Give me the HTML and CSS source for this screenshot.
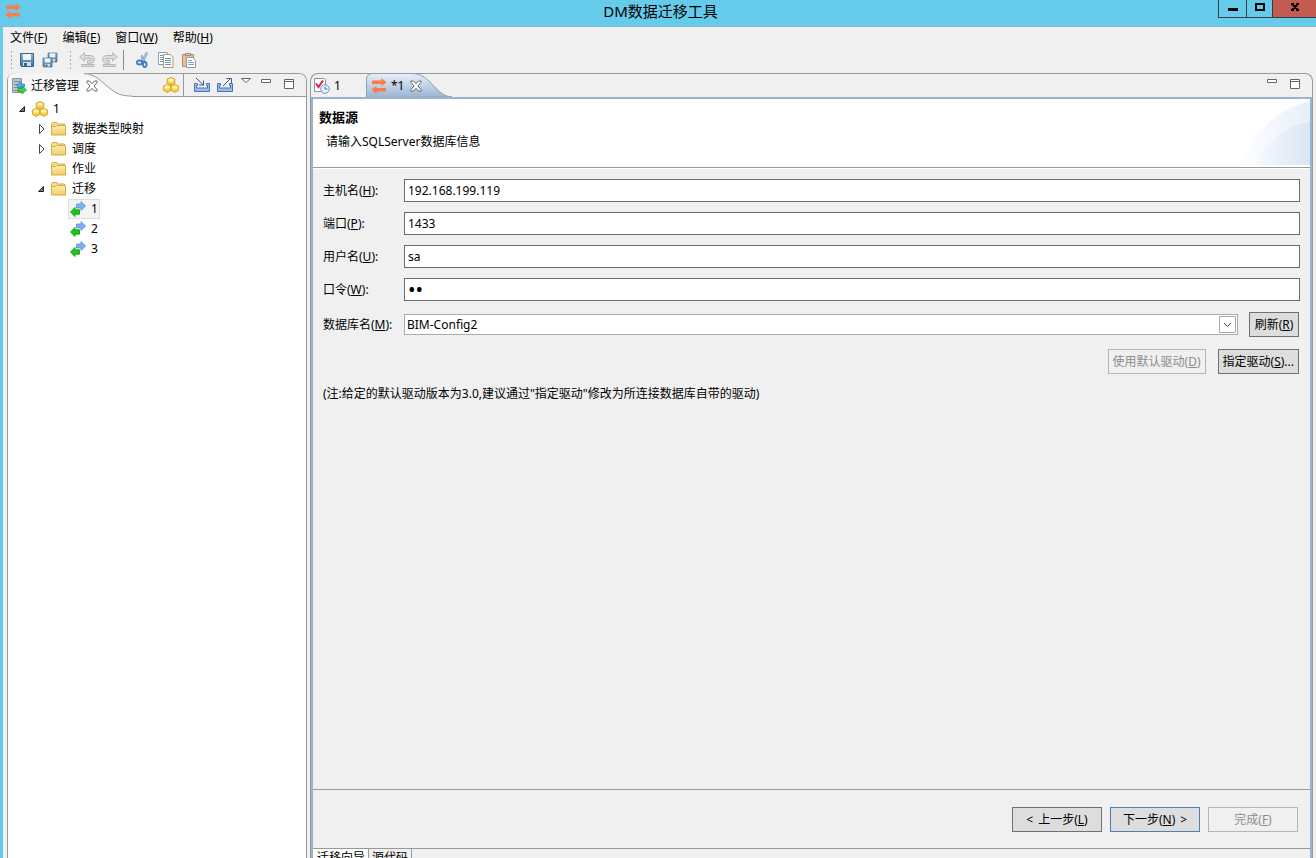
FILE: index.html
```html
<!DOCTYPE html>
<html lang="zh-CN">
<head>
<meta charset="utf-8">
<title>DM数据迁移工具</title>
<link rel="stylesheet" href="styles.css">
</head>
<body>
<svg class="defs" aria-hidden="true">
  <defs>
    <linearGradient id="gold" x1="0" y1="0" x2="0" y2="1"><stop offset="0" stop-color="#fff0a0"/><stop offset="1" stop-color="#f2c42c"/></linearGradient>
    <linearGradient id="fold" x1="0" y1="0" x2="0" y2="1"><stop offset="0" stop-color="#fdeeb0"/><stop offset="1" stop-color="#f1cd62"/></linearGradient>
    <linearGradient id="disk" x1="0" y1="0" x2="0" y2="1"><stop offset="0" stop-color="#8fb4d0"/><stop offset="1" stop-color="#3f7199"/></linearGradient>
    <linearGradient id="blueTab" x1="0" y1="0" x2="0" y2="1"><stop offset="0" stop-color="#e9f0f8"/><stop offset="1" stop-color="#99b4d1"/></linearGradient>
    <linearGradient id="whiteTab" x1="0" y1="0" x2="0" y2="1"><stop offset="0" stop-color="#f4f4f4"/><stop offset="1" stop-color="#ffffff"/></linearGradient>
    <linearGradient id="arcA" x1="0" y1="0" x2="1" y2="0"><stop offset="0" stop-color="#ffffff"/><stop offset="1" stop-color="#e8eefa"/></linearGradient>
    <linearGradient id="arcB" x1="0" y1="0" x2="1" y2="0"><stop offset="0" stop-color="#f5f8fe"/><stop offset="1" stop-color="#dbe5f4"/></linearGradient>
    <symbol id="swap" viewBox="0 0 16 16"><path fill="#fb7c48" d="M1 2.500h9.500V0L15.500 4.200l-5 4.100V6H1zM15 10H5.500V7.700l-5 4.100 5 4.200v-2.500H15z"/></symbol>
    <symbol id="cubes" viewBox="0 0 16 16"><g fill="url(#gold)" stroke="#cf9d1c" stroke-width=".9"><path d="M8 .5l3.800 1.500v4.200L8 8 4.200 6.200V2z"/><path d="M4.200 7.300L8 9v4.200l-3.800 2.200L.4 13.200V9z"/><path d="M11.800 7.300L15.600 9v4.200l-3.800 2.200L8 13.200V9z"/></g><path fill="none" stroke="#fff8cc" stroke-width="1.300" d="M5.800 2.700l2.200 1 2.200-1M2 9.900l2.200 1 2.200-1M9.600 9.900l2.200 1 2.200-1"/></symbol>
    <symbol id="folder" viewBox="0 0 16 16"><path fill="#f7dc86" stroke="#d3ad4b" d="M.5 13.500v-11l1-1h4.500l1 1.500h6.500v10.500z"/><path fill="url(#fold)" stroke="#d3ad4b" d="M.5 14V5.500h4l1-1h9V14z"/></symbol>
    <symbol id="transfer" viewBox="0 0 16 16"><path fill="#82aff0" stroke="#5f8dd3" stroke-width=".8" d="M6.500 3H11V.5L15.600 5 11 9.500V7H6.500z"/><path fill="#16c916" stroke="#0a9410" stroke-width=".8" d="M9.500 8.800H5V6.400L.5 11 5 15.600v-2.400h4.500z"/></symbol>
    <symbol id="floppy" viewBox="0 0 16 16"><path fill="url(#disk)" stroke="#376688" d="M1.500 1.500h13v13h-12l-1-1z"/><path fill="#eef5fa" d="M4 2h8v6H4z"/><path fill="#d0dee9" d="M4 10h8v4H4z"/><path fill="#376688" d="M5 11h3v3H5z"/></symbol>
    <symbol id="undo" viewBox="0 0 16 16"><path fill="#dadada" stroke="#b8b8b8" d="M.7 5L5.500.7v2.800H11q4.300 0 4.300 3.800 0 4-4.300 4H8.500V8.500H11q1.200 0 1.200-1T11 6.500H5.500v2.800zM2.500 12.500h12.500v2H2.500z"/></symbol>
    <symbol id="closeX" viewBox="0 0 12 12"><path fill="#fff" stroke="#666" d="M1 1h2.500L6 3.700 8.500 1H11v1.500L8 6l3 3.500V11H8.500L6 8.300 3.500 11H1V9.500L4 6 1 2.500z"/></symbol>
    <symbol id="minView" viewBox="0 0 12 12"><path fill="#fff" stroke="#666" d="M1.500 1.500h9v3h-9z"/></symbol>
    <symbol id="maxView" viewBox="0 0 12 12"><path fill="#fff" stroke="#666" d="M1.500 1.500h9v9h-9zM1.500 3.500h9"/></symbol>
    <symbol id="tray" viewBox="0 0 16 16"><path fill="#9dbce8" stroke="#4a72b8" d="M.5 6.500h3v2h-1v2.500h11V8.500h-1v-2h3v8H.5z"/></symbol>
    <symbol id="closed" viewBox="0 0 10 10"><path fill="#fff" stroke="#444" d="M3.500 .5v9L8 5z"/></symbol>
    <symbol id="open" viewBox="0 0 10 10"><path fill="#777" stroke="#222" d="M7.500 2.500v5h-5z"/></symbol>
  </defs>
</svg>
<div class="window">
  <header class="titlebar">
    <svg class="icon app-icon"><use href="#swap"/></svg>
    <h1 class="title">DM数据迁移工具</h1>
    <div class="window-buttons">
      <button class="win-btn" aria-label="最小化"><svg width="12" height="12"><path fill="#000" d="M1 7h10v3H1z"/></svg></button>
      <button class="win-btn win-max" aria-label="最大化"><svg width="12" height="12"><path fill="none" stroke="#000" stroke-width="2" d="M2 3h8v6H2z"/></svg></button>
      <button class="win-btn win-close" aria-label="关闭"><svg width="12" height="12"><path fill="none" stroke="#000" stroke-width="2" d="M3 3l6 6M9 3l-6 6M2 3h3M7 3h3M2 9h3M7 9h3"/></svg></button>
    </div>
  </header>
  <div class="shell">
    <nav class="menubar">
      <button class="menu">文件(<u>F</u>)</button>
      <button class="menu">编辑(<u>E</u>)</button>
      <button class="menu">窗口(<u>W</u>)</button>
      <button class="menu">帮助(<u>H</u>)</button>
    </nav>
    <div class="toolbar">
      <span class="grip"></span>
      <button class="tool" aria-label="保存"><svg class="icon"><use href="#floppy"/></svg></button>
      <button class="tool" aria-label="全部保存"><svg class="icon" viewBox="0 0 16 16"><use href="#floppy" x="5" y="0" width="11" height="11"/><use href="#floppy" x="0" y="5" width="11" height="11"/></svg></button>
      <span class="grip grip-mid"></span>
      <button class="tool" aria-label="撤销" disabled><svg class="icon"><use href="#undo"/></svg></button>
      <button class="tool" aria-label="重做" disabled><svg class="icon flip"><use href="#undo"/></svg></button>
      <span class="divider"></span>
      <button class="tool" aria-label="剪切"><svg class="icon" viewBox="0 0 16 16"><path fill="#b9d3ea" stroke="#6f9ac4" stroke-width=".8" d="M11.500 0l1 2-4.500 8-1.500-.5zM7 3l3 6-1.500 1.500L6 5z"/><g fill="none" stroke="#3f7cc0" stroke-width="1.800"><ellipse cx="4.500" cy="10.500" rx="2.600" ry="2"/><ellipse cx="9.800" cy="12.500" rx="1.800" ry="2.500"/></g></svg></button>
      <button class="tool" aria-label="复制"><svg class="icon" viewBox="0 0 16 16"><path fill="#fff" stroke="#7fa0bd" d="M.5 .5h9v12h-9z"/><path fill="#fff" stroke="#b39c5c" d="M5.500 2.500h7l2.500 2.500v10.500H5.500z"/><path stroke="#6993c4" d="M2 3.500h3M2 5.500h3M2 7.500h3M2 9.500h3M7 6.500h6M7 8.500h6M7 10.500h6M7 12.500h6"/></svg></button>
      <button class="tool" aria-label="粘贴"><svg class="icon" viewBox="0 0 16 16"><path fill="#e8c28c" stroke="#b58c54" d="M1.500 2.500h11v12h-11z"/><path fill="#ddd" stroke="#888" d="M4.500 3.500v-2h5v2z"/><path fill="#fff" stroke="#8c9cb0" d="M5.500 5.500h6l3 3v7h-9z"/><path stroke="#7ea0cc" d="M7 8.500h4M7 10.500h6M7 12.500h6"/></svg></button>
    </div>
    <div class="workbench">
      <aside class="view">
        <div class="view-head">
          <div class="view-tab">
            <svg class="tab-shape" width="124" height="24" viewBox="0 0 124 24"><path fill="url(#whiteTab)" d="M0 24V7Q0 0 7 0h69c18 0 24 22.500 44 23h4v1z"/><path fill="none" stroke="#999" d="M76 .5c18 0 24 22 44 22.500h4"/></svg>
            <svg class="icon" viewBox="0 0 16 16"><path fill="#bcc6d0" stroke="#87939e" d="M1.500.5h9v14h-9z"/><path stroke="#7a8894" d="M3 3.500h6M3 6.500h6M3 9.500h6M3 12.500h4"/><path fill="#58aaf0" stroke="#2f80cc" stroke-width=".7" d="M13.500 6H10V3.500L5.500 7.200 10 11V9h3.500z"/><path fill="#3fd33f" stroke="#159a15" stroke-width=".7" d="M7 10.200h4V8l4.600 4-4.600 3.800v-2.200H7z"/></svg>
            <span>迁移管理</span>
            <button class="tool close" aria-label="关闭视图"><svg width="12" height="12"><use href="#closeX"/></svg></button>
          </div>
          <div class="view-tools">
            <button class="tool cubes" aria-label="工程"><svg class="icon"><use href="#cubes"/></svg></button>
            <button class="tool" aria-label="导入"><svg class="icon" viewBox="0 0 16 16"><use href="#tray"/><path fill="none" stroke="#315b91" d="M2 1l7.500 7M9.500 3.500v4.500H5"/></svg></button>
            <button class="tool" aria-label="导出"><svg class="icon" viewBox="0 0 16 16"><use href="#tray"/><path fill="none" stroke="#315b91" d="M6 9l8-8M9.500 1.500h5V6"/></svg></button>
            <button class="tool small" aria-label="菜单"><svg width="12" height="12"><path fill="#fff" stroke="#666" d="M1.500 1.500h9L6 5.500z"/></svg></button>
            <button class="tool small" aria-label="最小化"><svg width="12" height="12"><use href="#minView"/></svg></button>
            <button class="tool small" aria-label="最大化"><svg width="12" height="12"><use href="#maxView"/></svg></button>
          </div>
        </div>
        <ul class="tree">
          <li class="node"><svg class="twist"><use href="#open"/></svg><svg class="icon"><use href="#cubes"/></svg><span>1</span></li>
          <li class="node child"><svg class="twist"><use href="#closed"/></svg><svg class="icon"><use href="#folder"/></svg><span>数据类型映射</span></li>
          <li class="node child"><svg class="twist"><use href="#closed"/></svg><svg class="icon"><use href="#folder"/></svg><span>调度</span></li>
          <li class="node child"><svg class="twist"></svg><svg class="icon"><use href="#folder"/></svg><span>作业</span></li>
          <li class="node child"><svg class="twist"><use href="#open"/></svg><svg class="icon"><use href="#folder"/></svg><span>迁移</span></li>
          <li class="node leaf selected"><svg class="icon"><use href="#transfer"/></svg><span>1</span></li>
          <li class="node leaf"><svg class="icon"><use href="#transfer"/></svg><span>2</span></li>
          <li class="node leaf"><svg class="icon"><use href="#transfer"/></svg><span>3</span></li>
        </ul>
      </aside>
      <main class="editor">
        <div class="editor-tabs">
          <div class="etab">
            <svg class="icon" viewBox="0 0 16 16"><path fill="#fff" stroke="#8795ad" d="M.5.5h10l1 1v12H.5z"/><path fill="none" stroke="#e02430" stroke-width="2" d="M2 5.500l2.500 3.500L9 2.500"/><circle cx="11" cy="11" r="4.300" fill="#e5f1fc" stroke="#6d96c2"/><path fill="none" stroke="#46709d" d="M11 8.500V11h2.500"/></svg>
            <span>1</span>
          </div>
          <div class="etab active">
            <svg class="tab-shape" width="86" height="24" viewBox="0 0 86 24"><path fill="url(#blueTab)" stroke="#8e9fb3" d="M.5 24.500V6Q1 .5 7 .5h40c18 0 22 23 39 23.500z"/></svg>
            <svg class="icon"><use href="#swap"/></svg>
            <span>*1</span>
            <button class="tool close" aria-label="关闭"><svg width="12" height="12"><use href="#closeX"/></svg></button>
          </div>
          <div class="editor-tools">
            <button class="tool small" aria-label="最小化"><svg width="12" height="12"><use href="#minView"/></svg></button>
            <button class="tool small" aria-label="最大化"><svg width="12" height="12"><use href="#maxView"/></svg></button>
          </div>
        </div>
        <div class="editor-body">
          <section class="banner">
            <div><h2 class="banner-title">数据源</h2><p class="banner-text">请输入SQLServer数据库信息</p></div>
            <svg class="banner-art" width="72" height="68" viewBox="0 0 72 68"><path fill="url(#arcA)" d="M0 66Q24 14 72 2v64z"/><path fill="url(#arcB)" d="M18 66Q36 28 72 23v43z"/></svg>
          </section>
          <form class="form">
            <div class="field"><label for="host">主机名(<u>H</u>):</label><input id="host" class="text" type="text" value="192.168.199.119"></div>
            <div class="field"><label for="port">端口(<u>P</u>):</label><input id="port" class="text" type="text" value="1433"></div>
            <div class="field"><label for="user">用户名(<u>U</u>):</label><input id="user" class="text" type="text" value="sa"></div>
            <div class="field"><label for="pass">口令(<u>W</u>):</label><input id="pass" class="text password" type="password" value="sa"></div>
            <div class="field database">
              <label for="db">数据库名(<u>M</u>):</label>
              <div class="db-row">
                <div class="combo"><select id="db" class="select"><option>BIM-Config2</option></select><svg class="chevron" width="17" height="17"><path fill="#fff" stroke="#aaa" d="M.5.5h16v16H.5z"/><path fill="none" stroke="#444" d="M5 7l3.500 3.500L12 7"/></svg></div>
                <button type="button" class="btn refresh">刷新(<u>R</u>)</button>
              </div>
            </div>
            <div class="drivers">
              <button type="button" class="btn" disabled>使用默认驱动(<u>D</u>)</button>
              <button type="button" class="btn">指定驱动(<u>S</u>)...</button>
            </div>
            <p class="note">(注:给定的默认驱动版本为3.0,建议通过"指定驱动"修改为所连接数据库自带的驱动)</p>
          </form>
          <footer class="wizard">
            <button class="btn step"><span>&lt;</span><span>上一步(<u>L</u>)</span></button>
            <button class="btn step primary"><span>下一步(<u>N</u>)</span><span>&gt;</span></button>
            <button class="btn step" disabled>完成(<u>F</u>)</button>
          </footer>
          <div class="pages">
            <button class="page current">迁移向导</button>
            <button class="page">源代码</button>
          </div>
        </div>
      </main>
    </div>
  </div>
</div>
</body>
</html>
```
FILE: styles.css
```css
* { box-sizing: border-box; }
body { margin: 0; overflow: hidden; color: #000; }
body, button, input, select { font-family: "Noto Sans", "Noto Sans CJK SC", sans-serif; font-size: 12px; line-height: 16px; }
button { margin: 0; padding: 0; border: 0; background: none; color: inherit; }
h1, h2, p, ul { margin: 0; padding: 0; }
svg { display: block; flex: none; }
u { text-decoration: underline; text-underline-offset: 1px; }
.defs { position: absolute; width: 0; height: 0; }
.icon { width: 16px; height: 16px; }
.flip { transform: scaleX(-1); }

.window { display: flex; flex-direction: column; height: 100vh; background: #66cbea; }
.titlebar { display: grid; grid-template-columns: 1fr auto 1fr; align-items: start; height: 27px; padding-left: 5px; border-bottom: 1px solid #82b8ca; }
.app-icon { margin-top: 3px; }
.title { font-size: 15px; font-weight: 400; line-height: 22px; }
.window-buttons { display: flex; justify-content: flex-end; }
.win-btn { display: flex; justify-content: center; width: 29px; height: 18px; padding-top: 1px; border: 1px solid #333f45; border-top: 0; }
.win-max { width: 26px; border-left: 0; }
.win-close { width: 43px; border-left: 0; border-right: 0; background: #c45a50; }

.shell { display: flex; flex-direction: column; flex: 1; min-height: 0; margin-left: 3px; background: #f0f0f0; }
.menubar { display: flex; gap: 15px; height: 20px; padding: 1px 0 0 7px; }
.toolbar { display: flex; align-items: center; height: 26px; padding-left: 7px; }
.tool { display: flex; margin-right: 7px; }
.grip { width: 3px; height: 20px; margin-right: 6px; background: radial-gradient(circle, #aaa 1px, transparent 1px) 0 0 / 3px 4px; }
.grip-mid { margin-left: 4px; margin-right: 7px; }
.divider { width: 1px; height: 20px; margin-left: -2px; margin-right: 11px; background: #888; }

.workbench { display: flex; flex: 1; min-height: 0; gap: 3px; padding: 0 3px 0 4px; }
.view { display: flex; flex-direction: column; flex: none; width: 300px; border: 1px solid #999; border-bottom: 0; border-radius: 8px 8px 0 0; background: #fff; }
.view-head { display: flex; justify-content: space-between; height: 23px; border-bottom: 1px solid #999; border-radius: 7px 7px 0 0; background: #f0f0f0; }
.view-tab { position: relative; display: flex; align-items: center; gap: 4px; padding: 1px 0 0 3px; }
.view-tab > *, .active > * { position: relative; }
.view-tab .tab-shape, .active .tab-shape { position: absolute; left: 0; top: -1px; }
.close { margin: 0 0 0 3px; }
.active .close { margin-left: 2px; }
.view-tools { display: flex; align-items: flex-start; padding-right: 3px; }
.view-tools .tool { margin-top: 3px; }
.view-tools .cubes { height: 22px; margin: 0 10px 0 0; padding: 3px 4px 0 0; border-right: 1px solid #999; }
.view-tools .small { margin: 3px 5px 0 0; }
.view-tools .small + .small { margin: 4px 8px 0 3px; }
.view-tools .small + .small + .small { margin-left: 3px; }
.tree { padding-top: 2px; list-style: none; }
.node { display: flex; align-items: center; height: 20px; gap: 5px; padding-left: 9px; }
.twist { width: 10px; height: 10px; }
.child { padding-left: 28px; }
.leaf { width: max-content; margin-left: 60px; padding: 0 1px; border: 1px solid transparent; }
.selected { border-color: #ddd; background: #f4f4f4; }

.editor { display: flex; flex-direction: column; flex: 1; min-width: 0; border: 1px solid #999; border-bottom: 0; border-radius: 8px 8px 0 0; }
.editor-tabs { display: flex; align-items: stretch; height: 23px; }
.etab { display: flex; align-items: center; gap: 4px; width: 55px; padding-left: 3px; }
.active { position: relative; width: 86px; padding-left: 5px; }
.editor-tools { display: flex; gap: 11px; margin-left: auto; padding: 4px 11px 0 0; }
.editor-tools .small { margin: 0; }
.editor-body { display: flex; flex-direction: column; flex: 1; min-height: 0; border: 2px solid #99b4d1; border-bottom: 0; border-left-color: #9eb0c0; }
.banner { display: flex; justify-content: space-between; height: 69px; padding-left: 6px; border-bottom: 1px solid #999; background: #fff; overflow: hidden; }
.banner-title { padding-top: 9px; font-size: 13px; line-height: 18px; }
.banner-text { padding: 8px 0 0 7px; }
.form { flex: 1; padding: 10px 10px 0; border-top: 1px solid #fff; }
.field { display: grid; grid-template-columns: 81px 1fr; align-items: center; margin-bottom: 10px; }
.text { width: 100%; height: 23px; padding: 0 3px; border: 1px solid #6c6c6c; border-radius: 0; background: #fff; }
.password { font-size: 20px; }
.database { margin-top: 11px; }
.db-row { display: flex; align-items: center; gap: 11px; padding-right: 1px; }
.combo { position: relative; flex: 1; }
.select { display: block; width: 100%; height: 21px; padding: 0 2px; border: 1px solid #ababab; border-radius: 0; background: #fff; color: #000; appearance: none; }
.chevron { position: absolute; top: 2px; right: 2px; pointer-events: none; }
.btn { height: 25px; padding: 0 4px; border: 1px solid #707070; background: #ddd; white-space: nowrap; }
.btn:disabled { border-color: #b5b5b5; background: #f0f0f0; color: #8c8c8c; }
.refresh { width: 50px; }
.drivers { display: flex; justify-content: flex-end; gap: 12px; margin-top: 12px; padding-right: 1px; }
.note { padding-top: 12px; }
.wizard { display: flex; justify-content: flex-end; gap: 8px; height: 59px; padding: 17px 12px 0; border-top: 1px solid #999; }
.step { display: flex; align-items: center; justify-content: center; gap: 5px; width: 90px; }
.step:disabled { gap: 0; }
.primary { border-color: #4c7fb0; }
.pages { display: flex; height: 10px; border-top: 1px solid #999; overflow: hidden; }
.page { height: 18px; padding: 0 3px; border-right: 1px solid #999; white-space: nowrap; }
.current { padding-left: 4px; background: #fff; }
```
